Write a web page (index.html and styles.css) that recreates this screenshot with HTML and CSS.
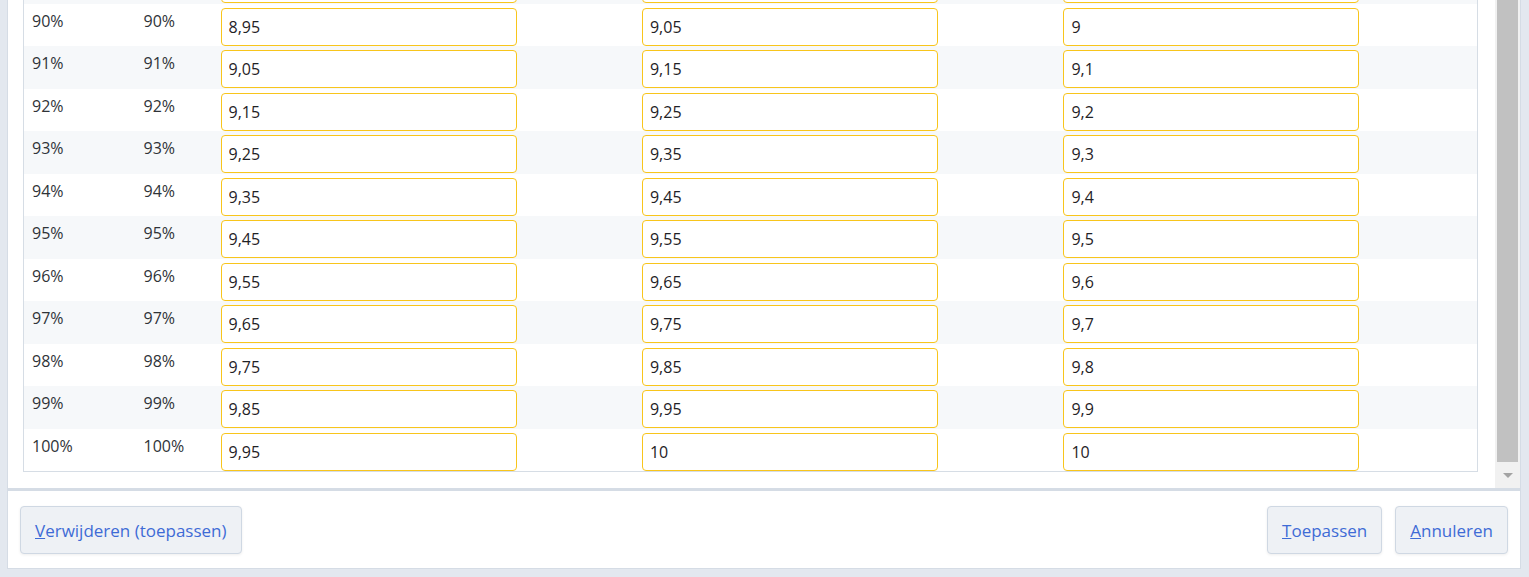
FILE: index.html
```html
<html>
	<head>
<link rel="stylesheet" href="styles.css">
	</head>
	<body>
		<div class="dialog">
			<div class="scrollArea">
				<div class="scrollContent">
					<table class="grades">
						<colgroup><col class="c1"><col class="c2"><col><col><col></colgroup>
						<tr><td>86%</td><td>86%</td><td><input value="8,55"></td><td><input value="8,65"></td><td><input value="8,6"></td></tr>
						<tr><td>87%</td><td>87%</td><td><input value="8,65"></td><td><input value="8,75"></td><td><input value="8,7"></td></tr>
						<tr><td>88%</td><td>88%</td><td><input value="8,75"></td><td><input value="8,85"></td><td><input value="8,8"></td></tr>
						<tr><td>89%</td><td>89%</td><td><input value="8,85"></td><td><input value="8,95"></td><td><input value="8,9"></td></tr>
						<tr><td>90%</td><td>90%</td><td><input value="8,95"></td><td><input value="9,05"></td><td><input value="9"></td></tr>
						<tr><td>91%</td><td>91%</td><td><input value="9,05"></td><td><input value="9,15"></td><td><input value="9,1"></td></tr>
						<tr><td>92%</td><td>92%</td><td><input value="9,15"></td><td><input value="9,25"></td><td><input value="9,2"></td></tr>
						<tr><td>93%</td><td>93%</td><td><input value="9,25"></td><td><input value="9,35"></td><td><input value="9,3"></td></tr>
						<tr><td>94%</td><td>94%</td><td><input value="9,35"></td><td><input value="9,45"></td><td><input value="9,4"></td></tr>
						<tr><td>95%</td><td>95%</td><td><input value="9,45"></td><td><input value="9,55"></td><td><input value="9,5"></td></tr>
						<tr><td>96%</td><td>96%</td><td><input value="9,55"></td><td><input value="9,65"></td><td><input value="9,6"></td></tr>
						<tr><td>97%</td><td>97%</td><td><input value="9,65"></td><td><input value="9,75"></td><td><input value="9,7"></td></tr>
						<tr><td>98%</td><td>98%</td><td><input value="9,75"></td><td><input value="9,85"></td><td><input value="9,8"></td></tr>
						<tr><td>99%</td><td>99%</td><td><input value="9,85"></td><td><input value="9,95"></td><td><input value="9,9"></td></tr>
						<tr><td>100%</td><td>100%</td><td><input value="9,95"></td><td><input value="10"></td><td><input value="10"></td></tr>
					</table>
				</div>
				<div class="scrollbar">
					<div class="thumb"></div>
					<div class="arrow"><span></span></div>
				</div>
			</div>
			<div class="footer">
				<button><u>V</u>erwijderen (toepassen)</button>
				<div class="spacer"></div>
				<button><u>T</u>oepassen</button>
				<button><u>A</u>nnuleren</button>
			</div>
		</div>
	</body>
</html>
```

FILE: styles.css
```css
body {
    margin: 0;
    background: #e3e8ef;
    font-family: "Open Sans", "Noto Sans", sans-serif;
    font-size: 16px;
    color: #2f3338;
}

.dialog {
    margin: 0 8px 0 7px;
    height: 569px;
    box-sizing: border-box;
    background: #ffffff;
    border: 1px solid #d5dce5;
    border-top: 0;
    display: flex;
    flex-direction: column;
}

.scrollArea {
    flex: 1;
    display: flex;
    min-height: 0;
}

.scrollContent {
    flex: 1;
    overflow: hidden;
    padding: 0 17px 16px 15px;
    display: flex;
    flex-direction: column;
    justify-content: flex-end;
}

.grades {
    width: 100%;
    border-collapse: collapse;
    border: 1px solid #d6dde5;
    flex-shrink: 0;
}

.grades col.c1 {
    width: 112px;
}

.grades col.c2 {
    width: 77px;
}

.grades tr:nth-child(even) {
    background: #f6f8fa;
}

.grades td {
    padding: 5px 8px 0 8px;
    line-height: 24px;
    vertical-align: top;
    height: 37.5px;
}

.grades td:nth-child(n+3) {
    padding: 4px 8px 0.5px 8px;
    height: 38px;
}

.grades input {
    display: block;
    width: 296px;
    height: 38px;
    box-sizing: border-box;
    border: 1px solid #f8c51c;
    border-radius: 4px;
    padding: 0 7px;
    font-family: inherit;
    font-size: 16px;
    color: #1f2226;
    background: #ffffff;
    outline: none;
}

.scrollbar {
    width: 25px;
    background: #f1f1f1;
    display: flex;
    flex-direction: column;
}

.thumb {
    flex: 1;
    margin: 0 2px;
    background: #c1c1c1;
}

.arrow {
    height: 26px;
    display: flex;
    align-items: center;
    justify-content: center;
}

.arrow span {
    width: 0;
    height: 0;
    border-left: 5.5px solid transparent;
    border-right: 5.5px solid transparent;
    border-top: 5px solid #a3a3a3;
}

.footer {
    border-top: 3px solid #d5dce5;
    padding: 15px 12px 14px 12px;
    display: flex;
    gap: 13px;
}

.spacer {
    flex: 1;
}

.footer button {
    height: 48px;
    padding: 0 14px;
    background: #eef1f5;
    border: 1px solid #cfd8e3;
    border-radius: 4px;
    box-shadow: 0 1px 3px rgba(0, 0, 0, 0.07);
    font-family: inherit;
    font-size: 17px;
    color: #3e6bd6;
}
```
